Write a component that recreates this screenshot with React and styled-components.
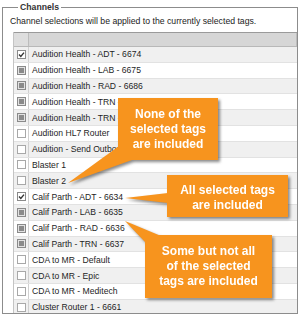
import React from 'react';
import styled, { createGlobalStyle } from 'styled-components';

const Global = createGlobalStyle`
  html, body { margin: 0; padding: 0; background: #fff; }
  body { width: 300px; height: 316px; overflow: hidden; font-family: "Liberation Sans", Arial, sans-serif; }
`;

const Page = styled.div`
  position: relative;
  width: 300px;
  height: 316px;
  overflow: hidden;
  padding: 2px 2px 0 2px;
  box-sizing: border-box;
`;

const Fieldset = styled.fieldset`
  margin: 0;
  padding: 4px 0 0 7px;
  border: 1px solid #8c8c8c;
  height: 312px;
  box-sizing: border-box;
  overflow: hidden;
  min-width: 0;
`;

const Legend = styled.legend`
  margin-left: 8px;
  padding: 0 2px;
  font-size: 8.7px;
  line-height: 10px;
  font-weight: bold;
  color: #333;
`;

const Description = styled.p`
  margin: 0 0 5px 0;
  font-size: 8.7px;
  line-height: 11px;
  color: #222;
`;

const Table = styled.div`
  margin-left: 3px;
  border-left: 1px solid #c4c4c4;
  display: flex;
  flex-direction: column;
`;

const HeaderRow = styled.div`
  display: grid;
  grid-template-columns: 15px 1fr;
  height: 15px;
  box-sizing: border-box;
  background: #d9d9d9;
  border-top: 1px solid #9a9a9a;
  border-bottom: 1px solid #b8b8b8;
`;

const HeaderCell = styled.div`
  border-right: 1px solid #bcbcbc;
  background: ${p => (p.$box ? '#dedede' : '#d6d6d6')};
`;

const Row = styled.div`
  display: grid;
  grid-template-columns: 15px 1fr;
  height: 15.8px;
  box-sizing: border-box;
  background: ${p => (p.$odd ? '#f0f0f0' : '#ffffff')};
  border-bottom: 1px solid #e2e2e2;
`;

const BoxCell = styled.div`
  display: flex;
  align-items: center;
  justify-content: center;
  border-right: 1px solid #d0d0d0;
`;

const NameCell = styled.div`
  display: flex;
  align-items: center;
  padding-left: 3px;
  font-size: 8.6px;
  color: #1e1e1e;
  white-space: nowrap;
  overflow: hidden;
`;

const Check = styled.span`
  position: relative;
  width: 9px;
  height: 9px;
  box-sizing: border-box;
  border: 1px solid ${p => (p.$state === 'none' ? '#a8a8a8' : '#8a8a8a')};
  background: ${p => (p.$state === 'mixed' ? '#e2e2e2' : '#fff')};
  display: flex;
  align-items: center;
  justify-content: center;
`;

const MixedMark = styled.span`
  width: 5px;
  height: 5px;
  background: #8a8a8a;
`;

const Layer = styled.div`
  position: absolute;
  inset: 0;
  pointer-events: none;
  filter: drop-shadow(2.5px 2.5px 1.5px rgba(40, 40, 40, 0.55));
`;

const Bubble = styled.div`
  position: absolute;
  left: ${p => p.$x}px;
  top: ${p => p.$y}px;
  width: ${p => p.$w}px;
  height: ${p => p.$h}px;
  box-sizing: border-box;
  padding-top: ${p => p.$pt}px;
  background: #f7941e;
  color: #fff;
  font-weight: bold;
  font-size: 12px;
  line-height: 15px;
  text-align: center;
`;

const Pointer = styled.svg`
  position: absolute;
  left: 0;
  top: 0;
`;

const rows = [
  ['Audition Health - ADT - 6674', 'checked'],
  ['Audition Health - LAB - 6675', 'mixed'],
  ['Audition Health - RAD - 6686', 'mixed'],
  ['Audition Health - TRN - 6687', 'mixed'],
  ['Audition Health - TRN - 6688', 'mixed'],
  ['Audition HL7 Router', 'none'],
  ['Audition - Send Outbound', 'none'],
  ['Blaster 1', 'none'],
  ['Blaster 2', 'none'],
  ['Calif Parth - ADT - 6634', 'checked'],
  ['Calif Parth - LAB - 6635', 'mixed'],
  ['Calif Parth - RAD - 6636', 'mixed'],
  ['Calif Parth - TRN - 6637', 'mixed'],
  ['CDA to MR - Default', 'none'],
  ['CDA to MR - Epic', 'none'],
  ['CDA to MR - Meditech', 'none'],
  ['Cluster Router 1 - 6661', 'none'],
];

const callouts = [
  { x: 118, y: 98, w: 100, h: 62, pt: 9, lines: ['None of the', 'selected tags', 'are included'], pts: '119,146 132,160 68,183' },
  { x: 167, y: 175, w: 121, h: 42, pt: 8, lines: ['All selected tags', 'are included'], pts: '168,193 168,203 125,198' },
  { x: 145, y: 235, w: 127, h: 63, pt: 9, lines: ['Some but not all', 'of the selected', 'tags are included'], pts: '146,243 161,236 125,221' },
];

function Checkbox({ state }) {
  return (
    <Check $state={state}>
      {state === 'mixed' && <MixedMark />}
      {state === 'checked' && (
        <svg width="7" height="7" viewBox="0 0 7 7">
          <polyline points="1,3.6 2.8,5.4 6,1.6" fill="none" stroke="#333" strokeWidth="1.4" />
        </svg>
      )}
    </Check>
  );
}

export default function App() {
  return (
    <Page>
      <Global />
      <Fieldset>
        <Legend>Channels</Legend>
        <Description>Channel selections will be applied to the currently selected tags.</Description>
        <Table>
          <HeaderRow>
            <HeaderCell $box />
            <HeaderCell />
          </HeaderRow>
          {rows.map(([name, state], i) => (
            <Row key={name} $odd={i % 2 === 0}>
              <BoxCell>
                <Checkbox state={state} />
              </BoxCell>
              <NameCell>{name}</NameCell>
            </Row>
          ))}
        </Table>
      </Fieldset>
      {callouts.map(c => (
        <Layer key={c.lines[0]}>
          <Pointer width="300" height="316" viewBox="0 0 300 316">
            <polygon points={c.pts} fill="#f7941e" />
          </Pointer>
          <Bubble $x={c.x} $y={c.y} $w={c.w} $h={c.h} $pt={c.pt}>
            {c.lines.map(l => (
              <div key={l}>{l}</div>
            ))}
          </Bubble>
        </Layer>
      ))}
    </Page>
  );
}
